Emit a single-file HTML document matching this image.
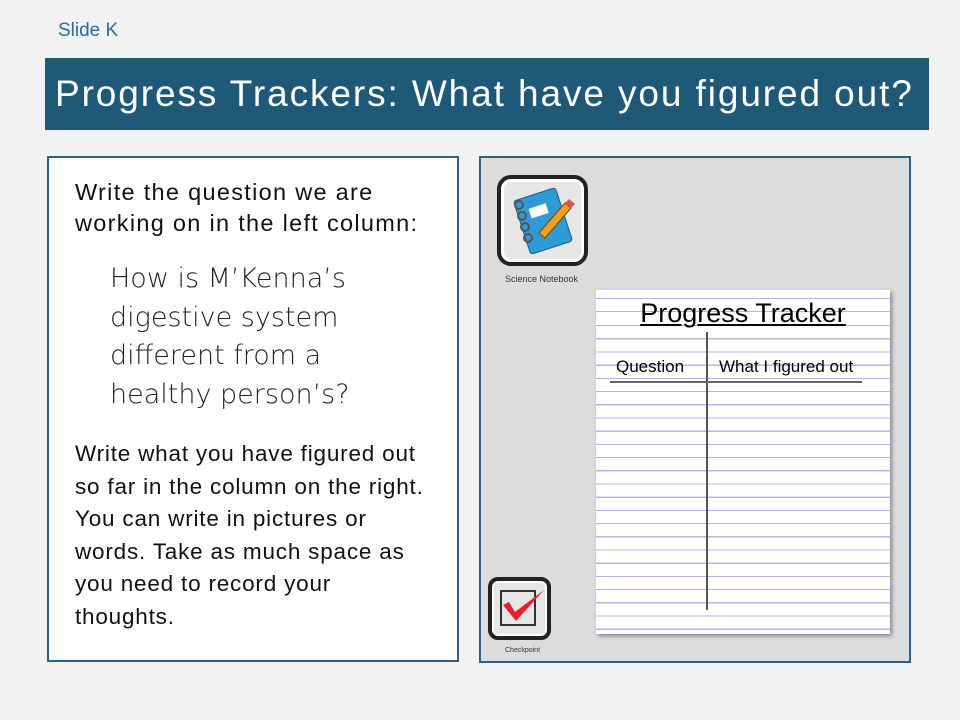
<!DOCTYPE html>
<html><head><style>
body{margin:0;width:960px;height:720px;background:#f2f2f2;position:relative;overflow:hidden;font-family:"Liberation Sans",sans-serif}
.a{position:absolute}
</style></head><body>
<div class="a" style="left:58px;top:20px;font-size:19px;color:#2a6f97">Slide K</div>
<div class="a" style="left:45px;top:58px;width:884px;height:72px;background:#1f5978;color:#fff;font-size:37px;line-height:72px;padding-left:10px;box-sizing:border-box;letter-spacing:1.9px;white-space:nowrap;font-weight:300">Progress Trackers: What have you figured out?</div>
<div class="a" style="left:47px;top:156px;width:412px;height:506px;background:#fff;border:2px solid #2a6385;box-sizing:border-box"></div>
<div class="a" style="left:75px;top:177px;font-size:23.5px;line-height:31px;color:#111;white-space:nowrap;letter-spacing:1.3px">Write the question we are<br>working on in the left column:</div>
<div class="a" style="left:110px;top:260px;font-size:27px;line-height:38.5px;color:#222;white-space:nowrap;font-family:'DejaVu Sans',sans-serif;font-weight:200">How is M’Kenna’s<br>digestive system<br>different from a<br>healthy person’s?</div>
<div class="a" style="left:75px;top:438px;font-size:22.5px;line-height:32.5px;color:#111;white-space:nowrap;letter-spacing:0.8px">Write what you have figured out<br>so far in the column on the right.<br>You can write in pictures or<br>words. Take as much space as<br>you need to record your<br>thoughts.</div>
<div class="a" style="left:479px;top:156px;width:432px;height:507px;background:#dcdcdc;border:2px solid #2a6385;box-sizing:border-box"></div>
<div class="a" style="left:497px;top:175px;width:91px;height:91px;border:4px solid #222;border-radius:14px;box-sizing:border-box;background:#e6e6e6;box-shadow:inset 0 0 0 3px #fff"></div>
<svg class="a" style="left:505px;top:183px" width="76" height="76" viewBox="0 0 76 76">
<rect x="16" y="10" width="44" height="56" rx="3" fill="#2e9ad6" stroke="#1a5e8c" transform="rotate(-18 38 38)"/>
<rect x="28" y="22" width="18" height="10" fill="#fff" transform="rotate(-18 38 38)"/>
<g fill="none" stroke="#555" stroke-width="2"><circle cx="14" cy="22" r="4"/><circle cx="17" cy="33" r="4"/><circle cx="20" cy="44" r="4"/><circle cx="23" cy="55" r="4"/></g>
<path d="M34 50 L60 20 L66 25 L40 55 Z" fill="#f0a020" stroke="#7a4a00"/>
<path d="M60 20 L64 16 L70 21 L66 25Z" fill="#e05050"/>
</svg>
<div class="a" style="left:505px;top:274px;font-size:9px;color:#333">Science Notebook</div>
<div class="a" style="left:596px;top:290px;width:294px;height:344px;background:#fff;box-shadow:2px 2px 4px rgba(0,0,0,.4);background-image:repeating-linear-gradient(to bottom,transparent 0,transparent 12px,#b4b4e6 12px,#b4b4e6 13.2px);background-position:0 23px"></div>
<div class="a" style="left:596px;top:298px;width:294px;text-align:center;font-size:27px;color:#000;text-decoration:underline">Progress Tracker</div>
<div class="a" style="left:706px;top:332px;width:2px;height:278px;background:#555"></div>
<div class="a" style="left:610px;top:381px;width:252px;height:2px;background:#666"></div>
<div class="a" style="left:616px;top:357px;font-size:17px;color:#000">Question</div>
<div class="a" style="left:719px;top:357px;font-size:17px;color:#000">What I figured out</div>
<div class="a" style="left:488px;top:577px;width:63px;height:63px;border:4px solid #222;border-radius:10px;box-sizing:border-box;background:#e6e6e6;box-shadow:inset 0 0 0 2px #fff"></div>
<div class="a" style="left:500px;top:590px;width:36px;height:36px;border:2px solid #333;box-sizing:border-box"></div>
<svg class="a" style="left:500px;top:585px" width="46" height="40"><path d="M3 20 L9 17 L15 27 L44 5 L16 36 Z" fill="#e8202a"/></svg>
<div class="a" style="left:505px;top:647px;font-size:7px;color:#333">Checkpoint</div>
</body></html>
